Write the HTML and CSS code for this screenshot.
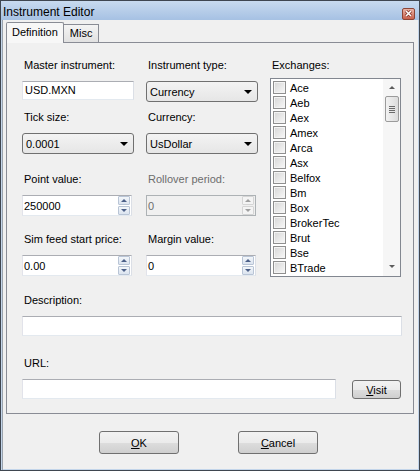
FILE: index.html
```html
<!DOCTYPE html>
<html lang="en">
<head>
    <meta charset="UTF-8">
    <title>Instrument Editor</title>
    <link rel="stylesheet" href="styles.css">
</head>
<body>
    <div class="window">
        <div class="titlebar">
            <span class="title">Instrument Editor</span>
            <span class="close">
                <svg width="11" height="10" viewBox="0 0 11 10">
                    <path d="M3 2 L8 7 M8 2 L3 7" stroke="#7a2a1e" stroke-width="3"/>
                    <path d="M3 2 L8 7 M8 2 L3 7" stroke="#fff" stroke-width="1.6"/>
                </svg>
            </span>
        </div>

        <div class="client">
            <div class="tabs">
                <div class="tab selected">Definition</div>
                <div class="tab">Misc</div>
            </div>

            <div class="panel">
                <div class="form">
                    <div class="group">
                        <label>Master instrument:</label>
                        <div class="textbox">USD.MXN</div>
                    </div>
                    <div class="group">
                        <label>Instrument type:</label>
                        <div class="combo"><span>Currency</span><i class="arrow"></i></div>
                    </div>

                    <div class="exchanges">
                        <label>Exchanges:</label>
                        <div class="listbox">
                            <ul class="items">
                                <li><span class="check"></span>Ace</li>
                                <li><span class="check"></span>Aeb</li>
                                <li><span class="check"></span>Aex</li>
                                <li><span class="check"></span>Amex</li>
                                <li><span class="check"></span>Arca</li>
                                <li><span class="check"></span>Asx</li>
                                <li><span class="check"></span>Belfox</li>
                                <li><span class="check"></span>Bm</li>
                                <li><span class="check"></span>Box</li>
                                <li><span class="check"></span>BrokerTec</li>
                                <li><span class="check"></span>Brut</li>
                                <li><span class="check"></span>Bse</li>
                                <li><span class="check"></span>BTrade</li>
                            </ul>
                            <div class="scrollbar">
                                <i class="sb-up"></i>
                                <div class="thumb"><b></b><b></b><b></b><b></b></div>
                                <i class="sb-down"></i>
                            </div>
                        </div>
                    </div>

                    <div class="group">
                        <label>Tick size:</label>
                        <div class="combo"><span>0.0001</span><i class="arrow"></i></div>
                    </div>
                    <div class="group">
                        <label>Currency:</label>
                        <div class="combo"><span>UsDollar</span><i class="arrow"></i></div>
                    </div>

                    <div class="group">
                        <label>Point value:</label>
                        <div class="spin"><span>250000</span><div class="spin-btns"><i class="up"></i><i class="down"></i></div></div>
                    </div>
                    <div class="group disabled">
                        <label>Rollover period:</label>
                        <div class="spin"><span>0</span><div class="spin-btns"><i class="up"></i><i class="down"></i></div></div>
                    </div>

                    <div class="group">
                        <label>Sim feed start price:</label>
                        <div class="spin"><span>0.00</span><div class="spin-btns"><i class="up"></i><i class="down"></i></div></div>
                    </div>
                    <div class="group">
                        <label>Margin value:</label>
                        <div class="spin"><span>0</span><div class="spin-btns"><i class="up"></i><i class="down"></i></div></div>
                    </div>
                </div>

                <div class="row-field desc">
                    <label>Description:</label>
                    <div class="textbox"></div>
                </div>

                <div class="row-field url">
                    <label>URL:</label>
                    <div class="url-line">
                        <div class="textbox"></div>
                        <button class="btn visit"><u>V</u>isit</button>
                    </div>
                </div>
            </div>

            <div class="buttons">
                <button class="btn big"><u>O</u>K</button>
                <button class="btn big"><u>C</u>ancel</button>
            </div>
        </div>
    </div>
</body>
</html>
```

FILE: styles.css
```css
* {
    box-sizing: border-box;
}

body {
    margin: 0;
    font-family: "Liberation Sans", Arial, sans-serif;
    font-size: 11px;
    color: #000;
    background: #f0f0f0;
}

.window {
    width: 420px;
    height: 471px;
    border: 1px solid #3f4650;
    box-shadow: inset 0 0 0 1px #c3d5ea;
    background: #f0f0f0;
    display: flex;
    flex-direction: column;
}

.titlebar {
    height: 19px;
    display: flex;
    align-items: center;
    background: linear-gradient(#c8daef, #a6c1e3);
}

.title {
    font-size: 12px;
    padding-left: 2px;
    padding-top: 3px;
}

.close {
    margin-left: auto;
    margin-right: 4px;
    margin-top: 7px;
    width: 13px;
    height: 12px;
    border: 1px solid #8c4536;
    border-radius: 2px;
    background: linear-gradient(#eab3a6, #c9614d);
    display: flex;
    align-items: center;
    justify-content: center;
}

.close svg {
    display: block;
}

.client {
    flex: 1;
    padding: 2px 5px 0 3px;
    border-left: 1px solid #9aa3ad;
    margin-left: 1px;
}

/* tabs */
.tabs {
    display: flex;
    align-items: flex-end;
    height: 20px;
}

.tab {
    height: 18px;
    line-height: 17px;
    padding: 0 6px;
    border: 1px solid #898c95;
    border-bottom: none;
    border-left: none;
    background: linear-gradient(#f4f4f4, #e1e1e1);
}

.tab.selected {
    height: 21px;
    margin-bottom: -1px;
    position: relative;
    padding: 0 5px;
    line-height: 19px;
    border-left: 1px solid #898c95;
    border-radius: 2px 2px 0 0;
    background: #f7f7f7;
}

.panel {
    height: 372px;
    border: 1px solid #898c95;
    padding: 15px 10px 0 15px;
    background: #f0f0f0;
}

/* field grid */
.form {
    display: grid;
    grid-template-columns: 112px 112px 131px;
    grid-template-rows: 52px 62px 60px 45px;
    column-gap: 12px;
}

.group label,
.row-field label,
.exchanges label {
    display: block;
    line-height: 15px;
    margin-bottom: 8px;
    padding-left: 2px;
}

.disabled label {
    color: #6d6d6d;
}

.textbox {
    height: 19px;
    background: #fff;
    border: 1px solid;
    border-color: #abadb3 #dbdfe6 #e3e9ef #e2e3ea;
    padding-left: 2px;
    line-height: 17px;
}

.combo {
    height: 21px;
    border: 1px solid #707070;
    border-radius: 3px;
    background: linear-gradient(#f3f3f3, #e6e6e6);
    display: flex;
    align-items: center;
    padding: 0 5px 0 3px;
}

.combo span {
    flex: 1;
}

.arrow {
    width: 0;
    height: 0;
    border-left: 4px solid transparent;
    border-right: 4px solid transparent;
    border-top: 4px solid #000;
}

.spin {
    height: 21px;
    width: 110px;
    background: #fff;
    border: 1px solid;
    border-color: #abadb3 #dbdfe6 #e3e9ef #e2e3ea;
    display: flex;
    align-items: center;
    padding: 0 1px;
}

.spin span {
    flex: 1;
}

.spin-btns {
    width: 12px;
    display: flex;
    flex-direction: column;
    gap: 1px;
}

.spin-btns i {
    height: 9px;
    border: 1px solid #b9c5d6;
    border-radius: 1px;
    background: linear-gradient(#f3f6fa, #dbe4ef);
    display: flex;
    align-items: center;
    justify-content: center;
}

.spin-btns i::after {
    content: "";
    border-left: 3px solid transparent;
    border-right: 3px solid transparent;
}

.spin-btns .up::after {
    border-bottom: 3px solid #4c6088;
}

.spin-btns .down::after {
    border-top: 3px solid #4c6088;
}

.disabled .spin {
    background: #f0f0f0;
    border-color: #adb2b5;
    color: #6d6d6d;
}

.disabled .spin-btns i {
    border-color: #d5d5d5;
    background: #f4f4f4;
}

.disabled .spin-btns .up::after {
    border-bottom-color: #a0a0a0;
}

.disabled .spin-btns .down::after {
    border-top-color: #a0a0a0;
}

/* exchanges list */
.exchanges {
    grid-column: 3;
    grid-row: 1 / 5;
}

.exchanges label {
    margin-bottom: 5px;
}

.listbox {
    height: 199px;
    background: #fff;
    border: 1px solid #828790;
    display: flex;
}

.items {
    list-style: none;
    margin: 0;
    padding: 1px 0 0 2px;
    flex: 1;
}

.items li {
    height: 15px;
    display: flex;
    align-items: center;
}

.check {
    width: 13px;
    height: 13px;
    margin-right: 4px;
    border: 1px solid #8f8f8f;
    background: linear-gradient(135deg, #d6d6d6, #f8f8f8);
    box-shadow: inset 0 0 0 1px #f4f4f4;
}

.scrollbar {
    width: 17px;
    background: #f6f6f6;
    display: flex;
    flex-direction: column;
    align-items: center;
    padding-top: 7px;
}

.sb-up,
.sb-down {
    width: 0;
    height: 0;
    border-left: 3px solid transparent;
    border-right: 3px solid transparent;
}

.sb-up {
    border-bottom: 3px solid #5c5c5c;
}

.sb-down {
    margin-top: auto;
    margin-bottom: 8px;
    border-top: 3px solid #5c5c5c;
}

.thumb {
    margin-top: 7px;
    width: 14px;
    height: 26px;
    border: 1px solid #9b9b9b;
    border-radius: 2px;
    background: linear-gradient(90deg, #f2f2f2, #dcdcdc);
    display: flex;
    flex-direction: column;
    align-items: center;
    justify-content: center;
    gap: 1px;
}

.thumb b {
    width: 6px;
    height: 1px;
    background: #6a6a6a;
}

/* description / url */
.row-field.desc {
    margin-top: 16px;
}

.row-field.url {
    margin-top: 20px;
}

.desc .textbox {
    width: 380px;
    height: 20px;
}

.url-line {
    display: flex;
    align-items: flex-start;
    gap: 16px;
}

.url-line .textbox {
    width: 314px;
    height: 20px;
}

.btn {
    font-family: inherit;
    font-size: 11px;
    color: #000;
    border: 1px solid #707070;
    border-radius: 3px;
    background: linear-gradient(#f2f2f2 0%, #ebebeb 50%, #dddddd 51%, #cfcfcf 100%);
    padding: 0;
}

.visit {
    width: 49px;
    height: 19px;
    margin-top: 1px;
}

.buttons {
    display: flex;
    justify-content: center;
    gap: 59px;
    padding-top: 17px;
    margin-left: -3px;
}

.btn.big {
    width: 80px;
    height: 23px;
}
```
